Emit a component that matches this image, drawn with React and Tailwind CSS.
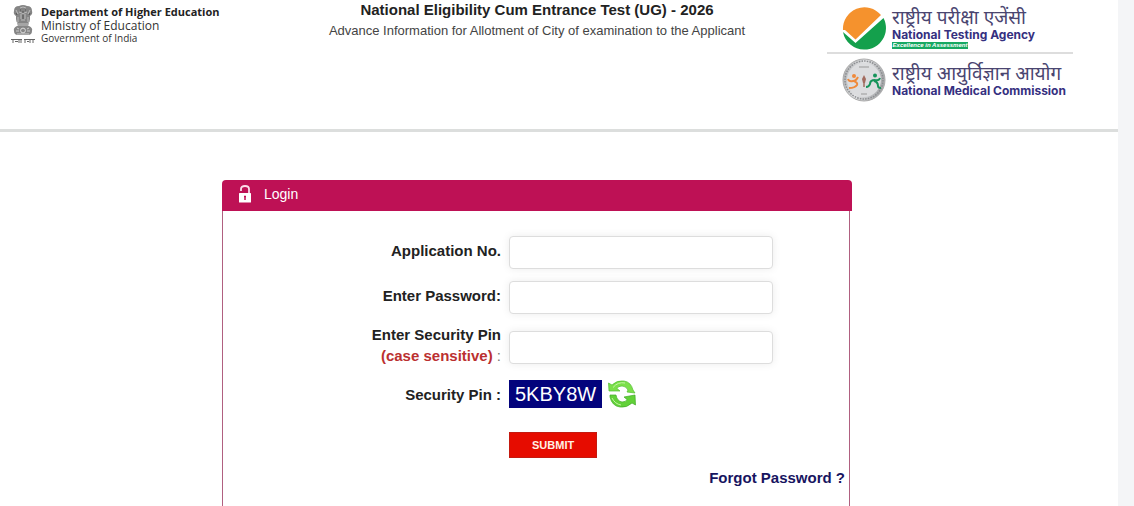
import { useState } from "react";

function Emblem() {
  return (
    <svg viewBox="0 0 24 40" className="w-6 h-10 shrink-0" aria-hidden="true">
      <path
        d="M8 2q4-2 8 0 5 0 5 5 1 3-2 5v3q0 3-2 4H7q-2-1-2-4v-3Q2 10 3 7q0-5 5-5z"
        fill="#858585"
      />
      <path
        d="M9 4q3-2 6 0M8 8q4 3 8 0M10 10v5M14 10v5M5 6l2 4M19 6l-2 4M7 13v5M17 13v5M10 16h4"
        stroke="#bbb"
        strokeWidth="1"
        fill="none"
      />
      <path
        d="M9 6h1M14 6h1M11 8h2M5 9l1 2M19 9l-1 2M12 11v4"
        stroke="#555"
        strokeWidth="1"
        fill="none"
      />
      <path d="M6 19h12l-1 4H7z" fill="#a5a5a5" />
      <path d="M6 22h12q4 2 3 5 0 4-4 4H7q-4 0-4-4-1-3 3-5z" fill="#868686" />
      <circle cx="12" cy="26.500" r="2.400" fill="none" stroke="#ddd" />
      <path
        d="M5 27h3M16 27h3M6 24l2 1M18 24l-2 1M6 30h12"
        stroke="#ccc"
        fill="none"
      />
      <path
        d="M0 35.500h11M13 35.500h11M2 35v4M4 37.500h3M8 35v4M10 36v3M14 35v4M16 37.500h2M19 35v4M22 35v4"
        stroke="#666"
        strokeWidth="1"
        fill="none"
      />
    </svg>
  );
}

function TestingAgencyLogo() {
  return (
    <svg viewBox="0 0 44 44" className="size-11 shrink-0" aria-hidden="true">
      <path
        d="M1 24A21.500 21.500 0 0 1 39 9L13.500 33.500 3 24z"
        fill="#f5922d"
      />
      <path
        d="M1 26L13.500 37 41.500 12A21.500 21.500 0 0 1 22 43.500 21.500 21.500 0 0 1 1 26z"
        fill="#14a04c"
      />
    </svg>
  );
}

function MedicalCommissionLogo() {
  return (
    <svg viewBox="0 0 44 44" className="size-11 shrink-0" aria-hidden="true">
      <defs>
        <linearGradient id="seal" x1="0" x2="1" y1="0" y2="0.300">
          <stop offset="0" stopColor="#a9abad" />
          <stop offset="0.500" stopColor="#e2e3e5" />
          <stop offset="1" stopColor="#a9abad" />
        </linearGradient>
      </defs>
      <circle cx="22" cy="22" r="21" fill="url(#seal)" stroke="#aaa" />
      <circle
        cx="22"
        cy="22"
        r="19"
        fill="none"
        stroke="#8b8d90"
        strokeWidth="1.500"
        strokeDasharray="1.500 1.200"
      />
      <circle cx="22" cy="22" r="17" fill="#dcdddf" />
      <circle cx="12" cy="18" r="2" fill="#ef8a3b" />
      <circle cx="33" cy="17.500" r="2" fill="#16945a" />
      <path
        d="M6 21q1 3 5 2 3 0 5-4M12 23q4 2 3 4-2 3-8 3"
        stroke="#ef8a3b"
        strokeWidth="2"
        fill="none"
      />
      <path
        d="M38 20q-1 3-5 2M33 22q-5 0-5 4-1 3-4 3M32 23q4 1 4 5 0 2 3 2"
        stroke="#16945a"
        strokeWidth="2"
        fill="none"
      />
      <path d="M22 17l2 4-1 4h-2l-1-4z" fill="#a26c5f" />
      <path d="M22 24v5" stroke="#a26c5f" strokeWidth="1.500" />
      <path d="M17 9h10M19 36h6" stroke="#999" />
    </svg>
  );
}

function LockIcon() {
  return (
    <svg viewBox="0 0 14 18" className="w-3.5 h-[18px]" aria-hidden="true">
      <path
        d="M3 6V4q0-3 4-3t4 3v4"
        fill="none"
        stroke="#fbdce9"
        strokeWidth="1.800"
      />
      <rect x="1" y="8" width="12" height="9.500" rx="0.500" fill="#fff" />
      <path d="M7 11v4M6 11.500h2" stroke="#be1155" strokeWidth="1.500" />
    </svg>
  );
}

function RefreshIcon() {
  return (
    <svg viewBox="0 0 28 28" className="size-7" aria-hidden="true">
      <path
        d="M0.500 3l3.500 2Q9 0 16 1q7 1 9 9l2 3-8-1 1-2q-2-4-6-4-4 0-5 2.500l3 2.500H1z"
        fill="#7be04a"
        stroke="#52bd31"
        strokeWidth="0.700"
      />
      <path
        d="M27.500 25l-3.500-2Q19 28 12 27 4 26 2 17v-2h6q1 6 6 7 4 0 5-2.500l-3-2.500 11-2z"
        fill="#62d138"
        stroke="#42aa28"
        strokeWidth="0.700"
      />
      <path d="M5 7.500q5-6 12-4.500M4 18q3 6 9 7" stroke="#c4f5a4" fill="none" />
    </svg>
  );
}

function Field({ id, type = "text", value, onChange, children }) {
  return (
    <>
      <label
        htmlFor={id}
        className="-mt-0.5 pb-0.5 text-right text-[15px] leading-[21px] font-bold text-[#222]"
      >
        {children}
      </label>
      <input
        id={id}
        type={type}
        value={value}
        onChange={onChange}
        className="w-full max-w-[264px] h-[33px] px-3 bg-white border border-[#ddd] rounded-sm shadow-[0_0_8px_rgba(0,0,0,0.08)] text-sm"
      />
    </>
  );
}

function Agency({ hindi, english, children }) {
  return (
    <div>
      <p
        lang="hi"
        className="font-['Noto_Sans',sans-serif] text-[19px] leading-[22px] text-[#4a4570]"
      >
        {hindi}
      </p>
      <p className="font-['Inter',sans-serif] text-xs leading-[14px] font-bold">
        {english}
      </p>
      {children}
    </div>
  );
}

export default function App() {
  const [form, setForm] = useState({
    applicationNo: "",
    password: "",
    pin: "",
  });

  function update(name) {
    return (e) => setForm({ ...form, [name]: e.target.value });
  }

  return (
    <div className="flex min-h-screen bg-[#f4f5f7] font-['Liberation_Sans',Arial,sans-serif]">
      <div className="flex flex-col flex-1 mr-4 bg-white">
        <header className="grid grid-cols-[247px_1fr_291px] h-[132px] border-b-3 border-[#dcdedd]">
          <div className="flex gap-1.5 pl-[11px] pt-1 font-['Open_Sans',sans-serif] text-[#333]">
            <Emblem />
            <div className="pt-px whitespace-nowrap">
              <p className="text-[11px] leading-[14px] font-bold text-[#222]">
                Department of Higher Education
              </p>
              <p className="text-xs leading-[13px]">Ministry of Education</p>
              <p className="text-[10px] leading-3">Government of India</p>
            </div>
          </div>

          <div className="text-center text-[#222]">
            <h1 className="text-[15px] leading-[19px] font-bold">
              National Eligibility Cum Entrance Test (UG) - 2026
            </h1>
            <p className="pt-0.5 text-[13px] leading-5 text-[#444]">
              Advance Information for Allotment of City of examination to the
              Applicant
            </p>
          </div>

          <div className="w-[246px] pt-1.5 text-[#35307f] whitespace-nowrap">
            <div className="flex gap-1.5 pl-[15px] pb-0.5 border-b-2 border-[#ddd]">
              <TestingAgencyLogo />
              <Agency
                hindi="राष्ट्रीय परीक्षा एजेंसी"
                english="National Testing Agency"
              >
                <p className="w-[76px] bg-[#17a862] text-center text-[6px] leading-[7px] font-bold italic text-white">
                  Excellence in Assessment
                </p>
              </Agency>
            </div>
            <div className="flex items-center gap-1.5 pl-[15px] pt-1">
              <MedicalCommissionLogo />
              <Agency
                hindi="राष्ट्रीय आयुर्विज्ञान आयोग"
                english="National Medical Commission"
              />
            </div>
          </div>
        </header>

        <main className="flex flex-col flex-1 pt-12 pl-[222px] pr-[266px]">
          <h2 className="flex items-center gap-3 h-[31px] px-4 pb-[3px] rounded-t-sm bg-[#be1155] text-sm text-white">
            <LockIcon />
            Login
          </h2>
          <form
            onSubmit={(e) => e.preventDefault()}
            className="flex-1 mr-0.5 pt-[25px] border-x border-[#b06080]"
          >
            <div className="grid grid-cols-[278px_1fr] items-center gap-x-2 gap-y-3">
              <Field
                id="application-no"
                value={form.applicationNo}
                onChange={update("applicationNo")}
              >
                Application No.
              </Field>
              <Field
                id="password"
                type="password"
                value={form.password}
                onChange={update("password")}
              >
                Enter Password:
              </Field>
              <Field
                id="security-pin"
                value={form.pin}
                onChange={update("pin")}
              >
                Enter Security Pin
                <br />
                <span className="text-[#bb3030]">(case sensitive)</span>
                <span className="font-normal text-[#777]"> :</span>
              </Field>

              <p className="text-right text-[15px] leading-[21px] font-bold text-[#222]">
                Security Pin :
              </p>
              <div className="flex items-center gap-1.5">
                <output className="px-1.5 bg-[#03037c] text-xl leading-7 text-white">
                  5KBY8W
                </output>
                <button type="button" aria-label="Refresh security pin">
                  <RefreshIcon />
                </button>
              </div>

              <button
                type="submit"
                className="col-start-2 justify-self-start mt-3 px-[22px] h-[26px] border border-[#c41a10] bg-[#e60c00] text-[11px] font-bold text-[#fff0e4]"
              >
                SUBMIT
              </button>
            </div>
            <p className="pt-2 pr-1 text-right text-[15px] leading-6 font-bold text-[#17145f]">
              <a href="#forgot">Forgot Password ?</a>
            </p>
          </form>
        </main>
      </div>
    </div>
  );
}
